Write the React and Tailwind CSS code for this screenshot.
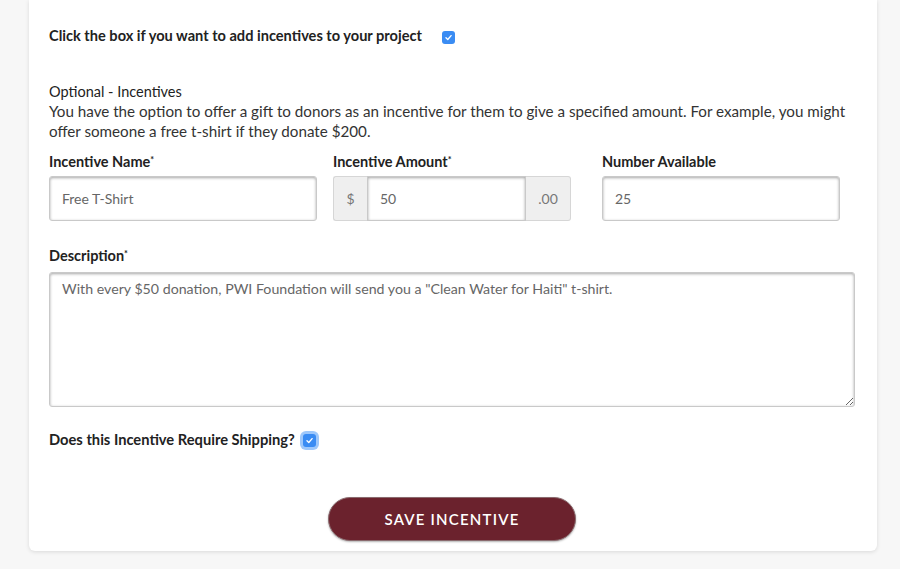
import React, { useState } from "react";

const Check = ({ checked, onChange, glow }) => (
  <button
    type="button"
    onClick={onChange}
    className={
      "flex items-center justify-center w-[13px] h-[13px] rounded-[3px] " +
      (checked ? "bg-[#3a8cf3]" : "bg-white border border-[#999]") +
      (glow ? " ring-[3px] ring-[#9ec8fb]" : "")
    }
  >
    {checked && (
      <svg width="9" height="9" viewBox="0 0 10 10">
        <path d="M2.2 5.3 L4.2 7.2 L7.9 2.9" fill="none" stroke="white" strokeWidth="1.5" strokeLinecap="round" strokeLinejoin="round" />
      </svg>
    )}
  </button>
);

const inputCls =
  "h-[45px] border border-[#c9c9c9] rounded-[3px] px-[12px] text-[14px] text-[#666] bg-white shadow-[inset_0_1px_3px_rgba(0,0,0,0.35)] outline-none";

const App = () => {
  const [form, setForm] = useState({
    add: true,
    name: "Free T-Shirt",
    amount: "50",
    available: "25",
    description: 'With every $50 donation, PWI Foundation will send you a "Clean Water for Haiti" t-shirt.',
    shipping: true,
  });

  const handleChange = (e) => {
    setForm({ ...form, [e.target.name]: e.target.value });
  };

  return (
    <div className="min-h-screen bg-[#f7f7f7] pb-[19px]" style={{ fontFamily: "Lato, 'Noto Sans', sans-serif" }}>
      <div className="ml-[29px] w-[848px] bg-white rounded-b-[6px] shadow-[0_1px_4px_rgba(0,0,0,0.12)] pl-[20px] pr-[22px] pt-[26px] pb-[10px] text-[#222]">
        <div className="flex items-center h-[20px]">
          <span className="text-[14.6px] font-bold leading-[20px]">Click the box if you want to add incentives to your project</span>
          <span className="ml-[20px] mt-[2px]">
            <Check checked={form.add} onChange={() => setForm({ ...form, add: !form.add })} />
          </span>
        </div>

        <div className="mt-[36px] leading-[20px]">
          <div className="text-[14.5px]">Optional - Incentives</div>
          <p className="text-[15.2px] text-[#333] leading-[19.5px]">
            You have the option to offer a gift to donors as an incentive for them to give a specified amount. For example, you might offer someone a free t-shirt if they donate $200.
          </p>
        </div>

        <div className="mt-[11px] flex">
          <div className="w-[268px]">
            <label className="block text-[14.5px] font-bold leading-[20px]">
              Incentive Name<sup className="text-[9px]">*</sup>
            </label>
            <input name="name" value={form.name} onChange={handleChange} className={inputCls + " mt-[4px] w-full"} />
          </div>
          <div className="w-[238px] ml-[16px]">
            <label className="block text-[14.5px] font-bold leading-[20px]">
              Incentive Amount<sup className="text-[9px]">*</sup>
            </label>
            <div className="mt-[4px] flex h-[45px]">
              <span className="w-[34px] flex items-center justify-center bg-[#efefef] border border-[#d6d6d6] border-r-0 rounded-l-[3px] text-[14px] text-[#777]">$</span>
              <input name="amount" value={form.amount} onChange={handleChange} className={inputCls + " w-[159px] rounded-none"} />
              <span className="flex-1 flex items-center justify-center bg-[#efefef] border border-[#d6d6d6] border-l-0 rounded-r-[3px] text-[14px] text-[#777]">.00</span>
            </div>
          </div>
          <div className="w-[238px] ml-[31px]">
            <label className="block text-[14.5px] font-bold leading-[20px]">Number Available</label>
            <input name="available" value={form.available} onChange={handleChange} className={inputCls + " mt-[4px] w-full"} />
          </div>
        </div>

        <label className="block mt-[25px] text-[14.5px] font-bold leading-[20px]">
          Description<sup className="text-[9px]">*</sup>
        </label>
        <textarea
          name="description"
          value={form.description}
          onChange={handleChange}
          className="mt-[6px] block w-full h-[135px] border border-[#c9c9c9] rounded-[3px] px-[12px] py-[6px] text-[14.2px] leading-[20px] text-[#666] shadow-[inset_0_1px_3px_rgba(0,0,0,0.35)] outline-none"
        />

        <div className="mt-[22px] flex items-center h-[20px]">
          <span className="text-[14.7px] font-bold leading-[20px]">Does this Incentive Require Shipping?</span>
          <span className="ml-[8px] mt-[2px]">
            <Check glow checked={form.shipping} onChange={() => setForm({ ...form, shipping: !form.shipping })} />
          </span>
        </div>

        <div className="mt-[48px] flex justify-center">
          <button
            type="button"
            className="w-[248px] h-[44px] rounded-full bg-[#6b222d] border border-[#8a6a6e] text-white text-[15px] font-semibold tracking-[1.2px] shadow-[0_1px_2px_rgba(0,0,0,0.3)]"
          >
            SAVE INCENTIVE
          </button>
        </div>
      </div>
    </div>
  );
};

export default App;
